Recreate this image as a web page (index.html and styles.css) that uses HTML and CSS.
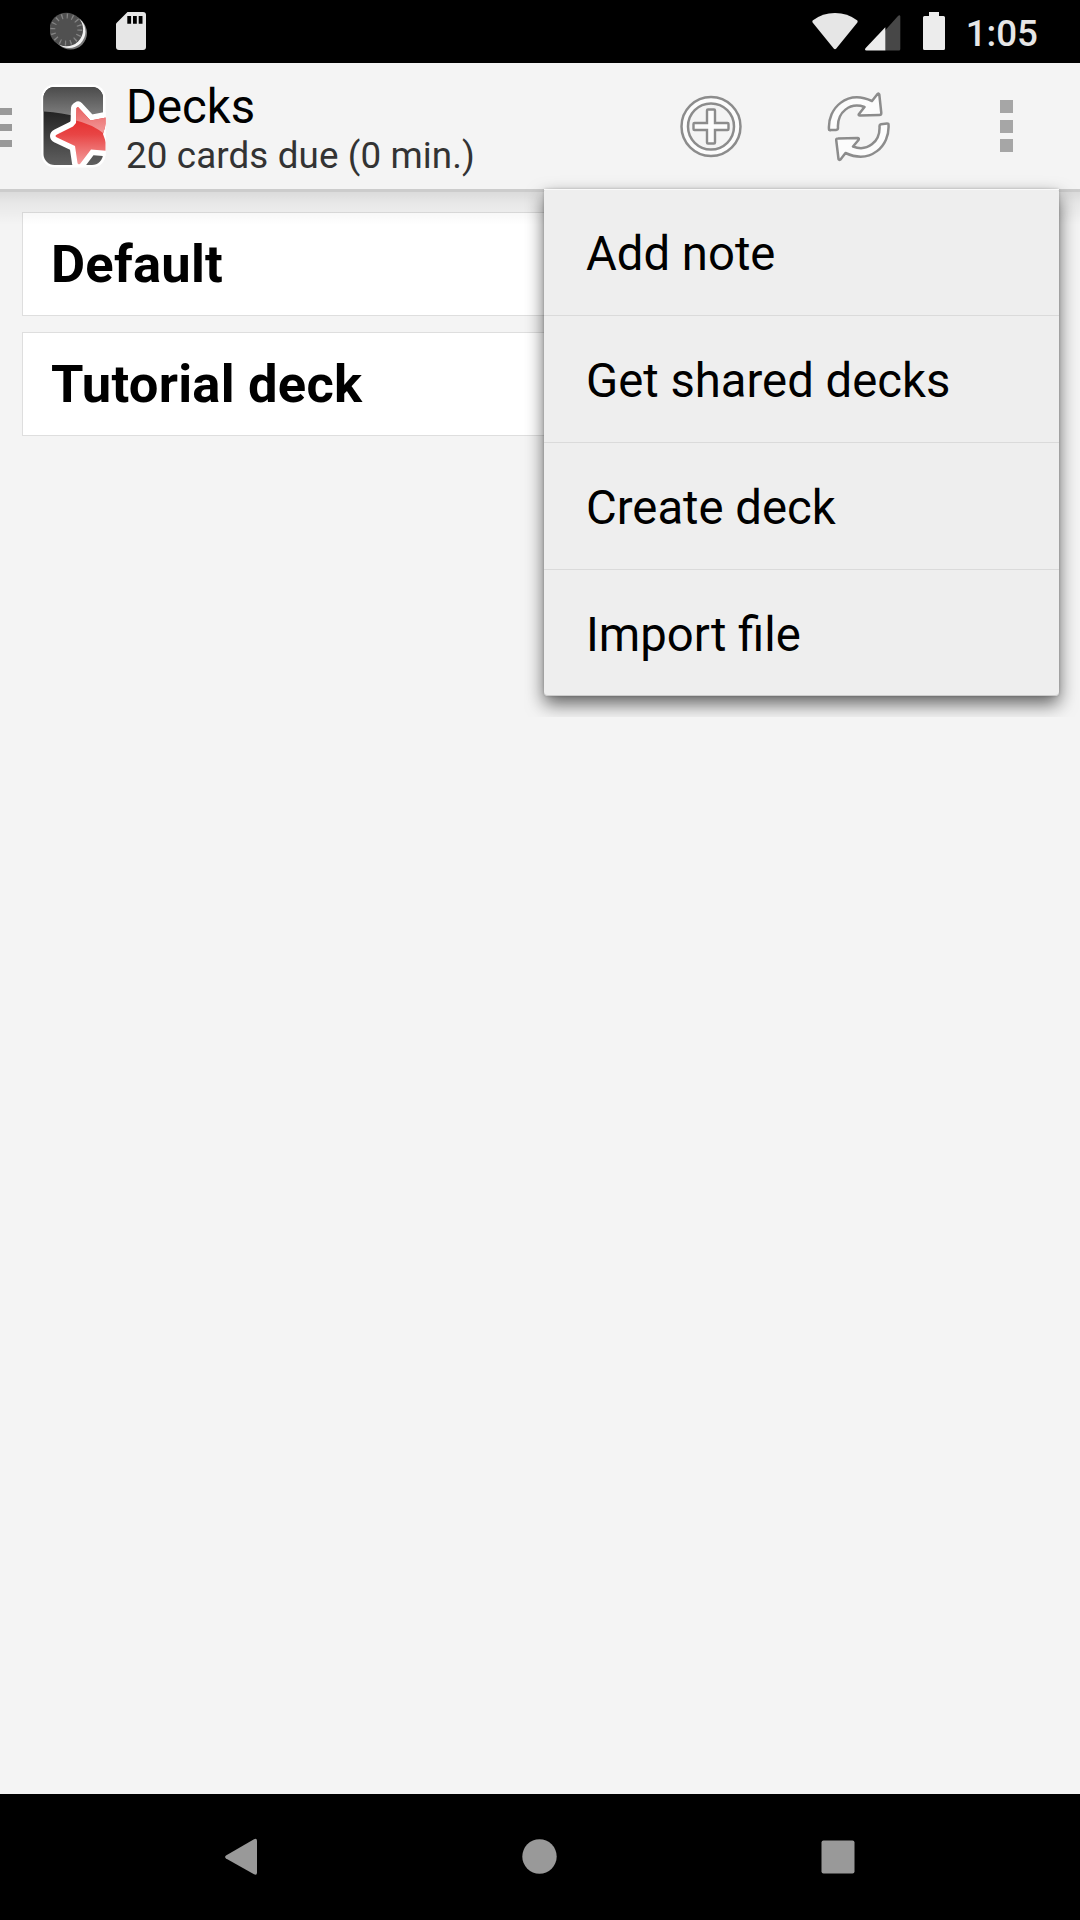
FILE: index.html
```html
<!DOCTYPE html>
<html lang="en">
<head>
<meta charset="utf-8">
<title>Decks</title>
<link rel="stylesheet" href="styles.css">
</head>
<body>
<div class="status-bar">
  <div class="status-left">
    <svg class="sync-icon" width="40" height="40" viewBox="0 0 40 40">
      <circle cx="20.500" cy="21" r="16.500" fill="#777"/>
      <circle cx="19" cy="19.500" r="16.500" fill="#f2f2f2"/>
      <circle cx="16.300" cy="17.500" r="16.800" fill="#505050"/>
      <circle cx="16.300" cy="17.500" r="13.500" fill="none" stroke="#858585" stroke-width="5" stroke-dasharray="1.3 4.001"/>
    </svg>
    <svg class="sd-icon" width="30" height="38" viewBox="0 0 30 38">
      <path d="M11.5 0H27q3 0 3 3v32q0 3-3 3H3q-3 0-3-3V11.5z" fill="#e6e6e6"/>
      <path d="M11.3 4h3.8v7.8h-3.8zM17 4h3.8v7.8H17zM22.7 4h3.8v7.8h-3.8z" fill="#000"/>
    </svg>
  </div>
  <div class="status-right">
    <svg class="wifi-icon" width="46" height="37" viewBox="0 0 46 37">
      <path d="M1 7.3Q10.500 0 23 0T45 7.300Q46.200 8.300 45.200 9.700L24.300 35.500Q23 37 21.700 35.500L.8 9.700Q-.2 8.300 1 7.300z" fill="#e6e6e6"/>
    </svg>
    <svg class="signal-icon" width="36" height="36" viewBox="0 0 36 36">
      <path d="M20 15.500 33 1.000Q35 -.8 35.300 1.600V34q0 1.500-1.500 1.500H20z" fill="#474747"/>
      <path d="M20.300 12.300V35.500H1.500Q-1 35.200.7 32.900z" fill="#ececec"/>
    </svg>
    <svg class="battery-icon" width="22" height="38" viewBox="0 0 22 38">
      <path d="M6 0h10v4h4.500Q22 4 22 5.500v31q0 1.500-1.500 1.500h-19Q0 38 0 36.500v-31Q0 4 1.500 4H6z" fill="#ececec"/>
    </svg>
    <span class="clock">1:05</span>
  </div>
</div>

<header class="app-bar">
  <div class="drawer-handle"><i></i><i></i><i></i></div>
  <svg class="logo" width="67" height="86" viewBox="0 0 67 86">
    <defs>
      <linearGradient id="shine" x1="0" y1="0" x2="0" y2="1">
        <stop offset="0" stop-color="#444"/><stop offset="1" stop-color="#999"/>
      </linearGradient>
      <linearGradient id="base" x1="0" y1="0" x2="0" y2="1">
        <stop offset=".3" stop-color="#202020"/><stop offset="1" stop-color="#646464"/>
      </linearGradient>
      <linearGradient id="star-light" x1="0" y1="0" x2="0" y2="1">
        <stop offset="0" stop-color="#e85a5a"/><stop offset="1" stop-color="#f3a0a0"/>
      </linearGradient>
      <linearGradient id="star-dark" x1="0" y1="0" x2="0" y2="1">
        <stop offset=".45" stop-color="#e63232"/><stop offset=".6" stop-color="#e84545"/><stop offset="1" stop-color="#f5aaaa"/>
      </linearGradient>
      <clipPath id="tile"><rect x="3.500" y="4" width="59.500" height="78" rx="11"/></clipPath>
      <clipPath id="edge"><rect x="0" y="0" width="65.500" height="84"/></clipPath>
      <clipPath id="star"><path d="M38 24 50.500 37.500 68 34 63 51 69 68 51 66.500 40 81Q38 82 37.500 80L35 63 17 54.500Q14 53 17 51.500L33 43.500 36 40 36.500 25Z"/></clipPath>
    </defs>
    <rect x="1.500" y="1.500" width="64" height="83" rx="13" fill="#fff"/>
    <g clip-path="url(#tile)">
      <rect width="67" height="86" fill="url(#base)"/>
      <path d="M0 0H67V48Q45 31 4 28.500H0z" fill="url(#shine)"/>
    </g>
    <g clip-path="url(#edge)">
      <path d="M38 24 50.500 37.500 68 34 63 51 69 68 51 66.500 40 81Q38 82 37.500 80L35 63 17 54.500Q14 53 17 51.500L33 43.500 36 40 36.500 25Z" fill="#fff" stroke="#fff" stroke-width="11" stroke-linejoin="round"/>
      <g clip-path="url(#star)">
        <rect width="67" height="86" fill="url(#star-dark)"/>
        <path d="M30 20H67V53Q53 41 34 37z" fill="url(#star-light)"/>
      </g>
    </g>
  </svg>
  <div class="titles">
    <h1 class="title">Decks</h1>
    <p class="subtitle">20 cards due (0 min.)</p>
  </div>
  <div class="actions">
    <svg class="add-icon" width="64" height="64" viewBox="0 0 64 64">
      <circle cx="31" cy="31.500" r="26.500" fill="none" stroke="#fcfcfc" stroke-width="8"/>
      <circle cx="31" cy="31.500" r="29.500" fill="none" stroke="#8c8c8c" stroke-width="2.500"/>
      <circle cx="31" cy="31.500" r="23" fill="none" stroke="#8c8c8c" stroke-width="2.500"/>
      <path transform="translate(-1 -.5)" d="M29 15h6q1 0 1 1V28.500H48.500q1 0 1 1v5q0 1-1 1H36V48q0 1-1 1H29q-1 0-1-1V35.500H15.500q-1 0-1-1v-5q0-1 1-1H28V16q0-1 1-1z" fill="#fcfcfc" stroke="#8c8c8c" stroke-width="2.400"/>
    </svg>
    <svg class="sync-action" width="64" height="70" viewBox="0 0 64 70">
      <g fill="#fcfcfc" stroke="#8c8c8c" stroke-width="2.500" stroke-linejoin="round">
        <path d="M2 37.500C.5 16 20-2.500 45 9L50.500 2Q52 1 52.300 2.500L54.300 21Q54.300 23 52.500 23L33 23.500Q31 23.500 32 22L37.500 15C23 10 10 20 11 36Q11 37.700 9 38H4Q2 38.500 2 37.500z"/>
        <path d="M61.500 32.500C63 54 43.500 72.500 18.500 61L13.500 67.500Q12 68.500 11.500 67L9.200 48Q9 46.500 11 46.500L30.500 46Q32.500 46 31.500 48L26 54.500C40 60 53.500 50 52.500 34Q52.500 32.500 54 32.200L60 31.500Q61.500 31.500 61.500 32.500z"/>
      </g>
    </svg>
    <div class="overflow"><i></i><i></i><i></i></div>
  </div>
</header>

<main class="content">
  <div class="deck">Default</div>
  <div class="deck">Tutorial deck</div>
</main>

<div class="menu-layer">
  <div class="menu">
    <div class="menu-item">Add note</div>
    <div class="menu-item">Get shared decks</div>
    <div class="menu-item">Create deck</div>
    <div class="menu-item">Import file</div>
  </div>
</div>

<nav class="nav-bar">
  <svg width="36" height="40" viewBox="0 0 36 40"><path d="M31 2.300Q34 .8 34 4V35.500Q34 38.800 31 37.300L3 21.600Q1.200 20 3 18.400z" fill="#999"/></svg>
  <svg width="36" height="40" viewBox="0 0 36 40"><circle cx="17.500" cy="19.500" r="17.200" fill="#999"/></svg>
  <svg width="36" height="40" viewBox="0 0 36 40"><rect x="1.500" y="3.500" width="33" height="33" rx="2" fill="#999"/></svg>
</nav>
</body>
</html>
```
FILE: styles.css
```css
* { box-sizing: border-box; }
body {
  position: relative;
  display: flex;
  flex-direction: column;
  width: 1080px;
  height: 1920px;
  margin: 0;
  overflow: hidden;
  background: #f4f4f4;
  color: #000;
  font-family: Roboto, "Liberation Sans", sans-serif;
}
svg { display: block; flex: none; }

.status-bar {
  display: flex;
  justify-content: space-between;
  height: 63px;
  padding: 12px 42px 0 50px;
  background: #000;
}
.status-left, .status-right { display: flex; align-items: flex-start; }
.sd-icon { margin-left: 26px; }
.wifi-icon { margin-top: 1px; }
.signal-icon { margin: 3px 0 0 7px; }
.battery-icon { margin-left: 22px; }
.clock {
  margin: 0 0 0 21px;
  color: #e6e6e6;
  font-size: 36.75px;
  font-weight: 500;
  line-height: 43px;
}

.app-bar {
  display: flex;
  align-items: flex-start;
  height: 126px;
  background: #f4f4f4;
}
.drawer-handle {
  display: flex;
  flex-direction: column;
  gap: 9px;
  width: 12px;
  margin-top: 45px;
}
.drawer-handle i { height: 7px; background: #999; }
.logo { margin: 20px 0 0 28px; }
.titles { margin: 17px 0 0 19px; }
.title {
  margin: 0;
  font-size: 47.25px;
  font-weight: 400;
  line-height: 55px;
}
.subtitle {
  margin: -1px 0 0;
  color: #333;
  font-size: 36.75px;
  letter-spacing: .12px;
  line-height: 43px;
}
.actions {
  display: flex;
  margin-left: auto;
  padding: 31px 67px 0 0;
}
.add-icon { margin-top: 1px; }
.sync-action { margin-left: 83px; margin-top: -2px; }
.overflow {
  display: flex;
  flex-direction: column;
  gap: 6.500px;
  width: 13px;
  margin: 6px 0 0 109px;
}
.overflow i { height: 13px; background: #a6a6a6; }

.content {
  position: relative;
  display: flex;
  flex: 1;
  flex-direction: column;
  gap: 16px;
  padding: 23px 22px 0;
}
.content::before {
  content: "";
  position: absolute;
  inset: 0 0 auto;
  height: 36px;
  background: linear-gradient(rgba(0,0,0,.165) 0 2.500px, rgba(0,0,0,.1) 3px, rgba(0,0,0,.05) 14px, rgba(0,0,0,.03) 23px, rgba(0,0,0,0));
}
.deck {
  height: 104px;
  padding-left: 28px;
  border: 1.500px solid #dedede;
  background: #fff;
  font-size: 52.5px;
  font-weight: 700;
  letter-spacing: .24px;
  line-height: 103px;
}

.menu-layer {
  position: absolute;
  top: 169px;
  left: 524px;
  width: 555px;
  height: 548px;
  padding: 20px;
  overflow: hidden;
}
.menu {
  width: 515px;
  height: 507px;
  border-radius: 2px 2px 4px 4px;
  background: #eee;
  box-shadow: 0 8px 18px rgba(0,0,0,.6), 0 0 3px rgba(0,0,0,.2);
}
.menu-item {
  height: 127px;
  padding-left: 42px;
  border-bottom: 1px solid #dadada;
  font-size: 47.25px;
  line-height: 130px;
}
.menu-item:first-child { border-top: 1px solid #fafafa; line-height: 128px; }
.menu-item:last-child { height: 126px; border-bottom-color: #ccc; border-radius: 0 0 4px 4px; }

.nav-bar {
  display: flex;
  justify-content: space-between;
  height: 126px;
  padding: 43px 224px 0 223px;
  background: #000;
}
```
